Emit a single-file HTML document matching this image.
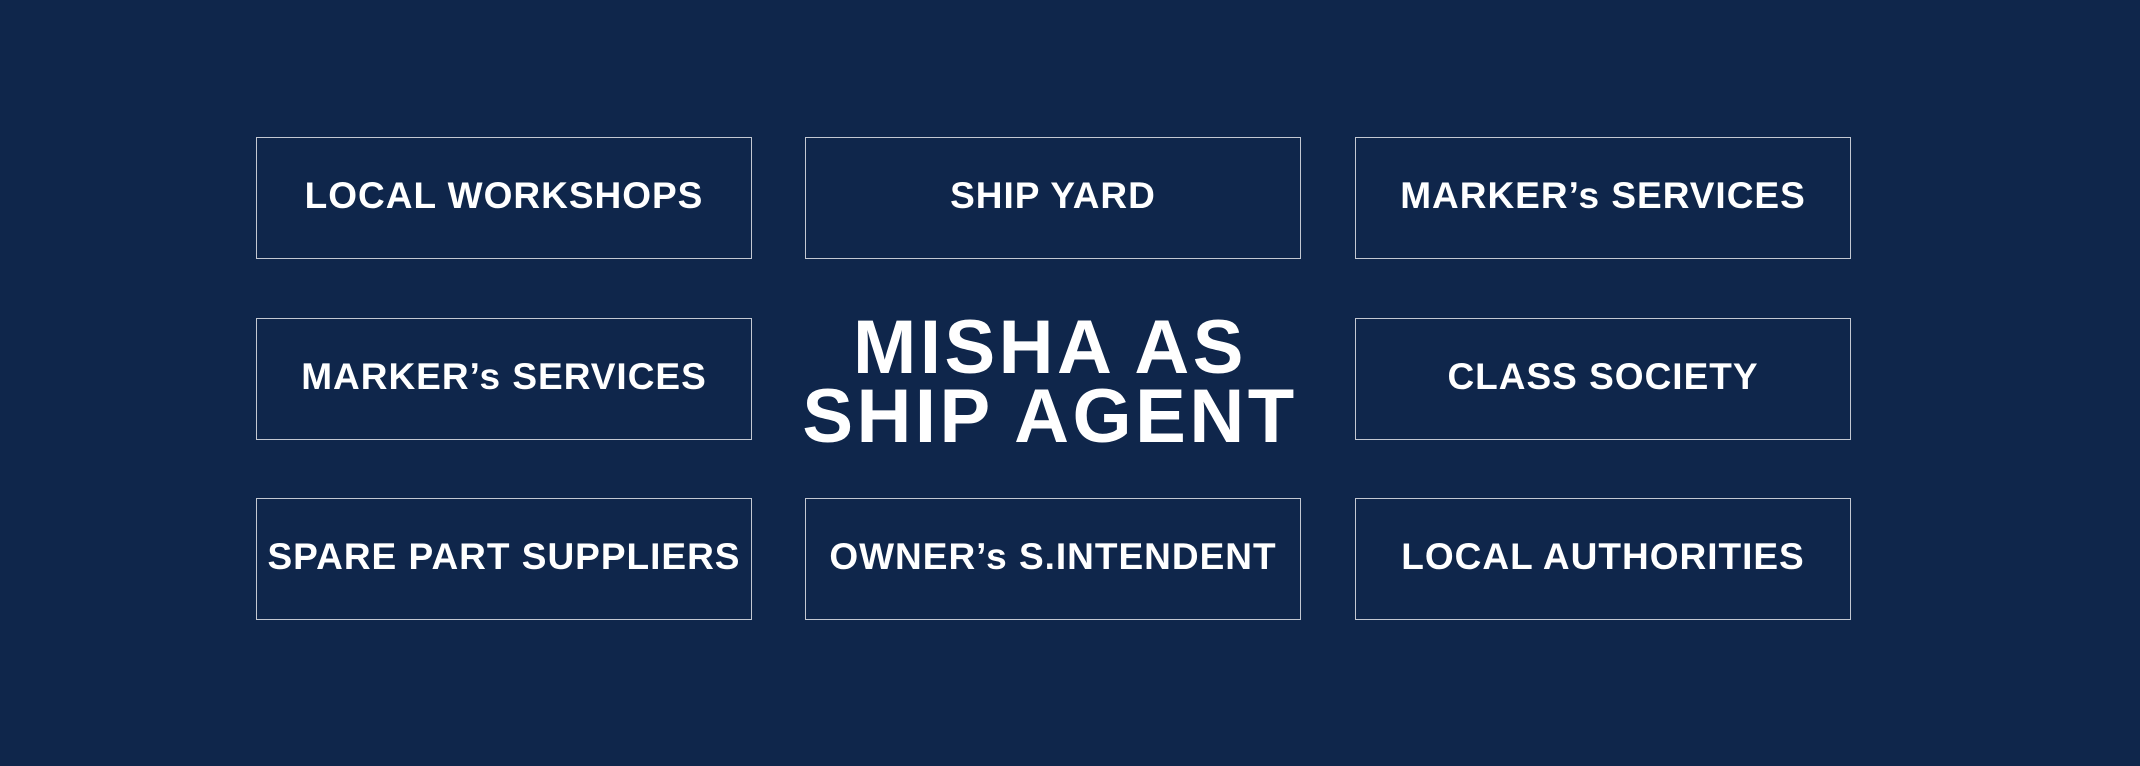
<!DOCTYPE html>
<html><head><meta charset="utf-8"><style>
html,body{margin:0;padding:0}
body{width:2140px;height:766px;background:#0f264b;position:relative;overflow:hidden;font-family:"Liberation Sans",sans-serif;color:#fff}
.b{position:absolute;width:496px;height:122px;border:1.5px solid #c3c8d2;display:flex;align-items:center;justify-content:center;font-weight:bold;font-size:37px;letter-spacing:1px;box-sizing:border-box;padding-bottom:5px;white-space:nowrap}
.c1{left:256px}.c2{left:805px}.c3{left:1355px}
.r1{top:137px}.r2{top:318px}.r3{top:498px}
.t{position:absolute;left:760px;width:580px;text-align:center;font-weight:bold;font-size:76px;line-height:69px;letter-spacing:3.5px;white-space:nowrap}
</style></head><body>
<div class="b c1 r1">LOCAL WORKSHOPS</div>
<div class="b c2 r1">SHIP YARD</div>
<div class="b c3 r1">MARKER’s SERVICES</div>
<div class="b c1 r2">MARKER’s SERVICES</div>
<div class="b c3 r2">CLASS SOCIETY</div>
<div class="b c1 r3">SPARE PART SUPPLIERS</div>
<div class="b c2 r3">OWNER’s S.INTENDENT</div>
<div class="b c3 r3">LOCAL AUTHORITIES</div>
<div class="t" style="top:313px">MISHA AS</div>
<div class="t" style="top:382px">SHIP AGENT</div>
</body></html>
